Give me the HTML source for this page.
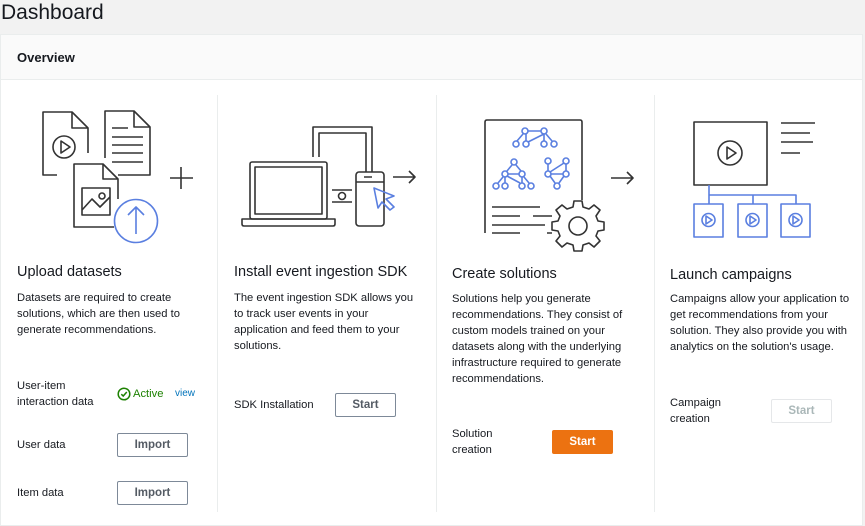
<!DOCTYPE html>
<html><head><meta charset="utf-8"><style>
*{margin:0;padding:0;box-sizing:border-box}
body{width:865px;height:526px;background:#f2f2f2;font-family:"Liberation Sans",sans-serif;color:#16191f;position:relative;overflow:hidden}
.a{position:absolute;white-space:nowrap}
.t{font-size:14.5px;color:#16191f}
.d{font-size:11.2px;line-height:16px;color:#16191f}
.l{font-size:11.2px;line-height:16px}
.b{position:absolute;border:1px solid #7d8998;background:#fff;font-size:11.5px;font-weight:bold;color:#545b64;text-align:center;border-radius:2px}
</style></head><body>
<div class="a" style="left:1px;top:1px;font-size:21px;color:#16191f">Dashboard</div>
<div class="a" style="left:0;top:34px;width:863px;height:492px;background:#fff;border:1px solid #eaeded"></div>
<div class="a" style="left:0;top:34px;width:863px;height:46px;background:#fafafa;border:1px solid #eaeded"></div>
<div class="a" style="left:17px;top:50px;font-size:13px;font-weight:bold">Overview</div>
<div class="a" style="left:217px;top:95px;width:1px;height:417px;background:#eaeded"></div>
<div class="a" style="left:436px;top:95px;width:1px;height:417px;background:#eaeded"></div>
<div class="a" style="left:654px;top:95px;width:1px;height:417px;background:#eaeded"></div>

<svg class="a" style="left:0;top:0" width="865" height="526" fill="none" stroke="#333" stroke-width="1.6" stroke-linejoin="round">
<!-- col1 -->
<path d="M57 175H43V112H72L88 128V153"/><path d="M72 112V128H88"/>
<circle cx="64" cy="147" r="11"/><path d="M61 141L70 147L61 153Z"/>
<path d="M118 175H150V127L134 111H105V158"/><path d="M134 111V127H150"/>
<path d="M112 128H128M112 137H143M112 145H143M112 153H143M112 162H143"/>
<path d="M114 227H74V164H103L118 179V199"/><path d="M103 164V179H118"/>
<rect x="82" y="188" width="28" height="27"/><path d="M82 210L92 199L100 207L110 197"/><circle cx="102" cy="196" r="3"/>
<circle cx="136" cy="221" r="21.5" stroke="#5a7fe0"/><path d="M136 234V207M128 215L136 207L144 215" stroke="#5a7fe0"/>
<path d="M170 178H193M181 167V189"/>
<!-- col2 -->
<path d="M313 157V127H372V172"/><path d="M319 157V133H366V172"/>
<rect x="250" y="162" width="77" height="57" rx="2"/><rect x="255" y="167" width="67" height="47"/>
<path d="M242 219H335V224Q335 226 333 226H244Q242 226 242 224Z"/>
<path d="M332 190H352M332 202H352"/><circle cx="342" cy="196" r="3.5"/>
<rect x="356" y="172" width="28" height="54" rx="3"/><path d="M356 182H384M364 177H372"/>
<path d="M374 188L394 196L386 199L394 207L390 210L382 202L378 208Z" stroke="#5a7fe0"/>
<path d="M393 177H415M409 171L415 177L409 183"/>
<!-- col3 -->
<path d="M485 233V122Q485 120 487 120H580Q582 120 582 122V200"/>
<path d="M492 207H540M492 216H520M533 216H552M492 225H545M492 233H520M547 233H552"/>
<g stroke="#5a7fe0">
<circle cx="525" cy="131" r="3"/><circle cx="544" cy="131" r="3"/><circle cx="516" cy="144" r="3"/><circle cx="526" cy="144" r="3"/><circle cx="544" cy="144" r="3"/><circle cx="554" cy="144" r="3"/>
<path d="M528 131H541M523 134L517 141M526 134V141M544 134L528 142M544 134V141M546 134L552 141"/>
<circle cx="514" cy="162" r="3"/><circle cx="505" cy="174" r="3"/><circle cx="522" cy="174" r="3"/><circle cx="496" cy="186" r="3"/><circle cx="505" cy="186" r="3"/><circle cx="522" cy="186" r="3"/><circle cx="531" cy="186" r="3"/>
<path d="M512 165L507 171M516 165L521 171M508 174H519M503 177L498 183M505 177V183M522 177V183M524 177L529 183M507 176L520 183"/>
<circle cx="548" cy="161" r="3"/><circle cx="566" cy="161" r="3"/><circle cx="548" cy="174" r="3"/><circle cx="566" cy="174" r="3"/><circle cx="557" cy="186" r="3"/>
<path d="M548 164V171M566 164V171M551 174H563M564 163L550 172M550 176L555 183M564 176L559 183"/>
</g>
<path d="M574 201L582 201L583 207L589 209L594 205L600 210L596 216L598 221L604 222V230L598 231L596 236L600 241L594 247L589 243L583 245L582 251H574L573 245L567 243L562 247L556 241L560 236L558 231L552 230V222L558 221L560 216L556 210L562 205L567 209L573 207Z" fill="#fff"/>
<circle cx="578" cy="226" r="9"/>
<path d="M611 178H633M627 172L633 178L627 184"/>
<!-- col4 -->
<rect x="694" y="122" width="73" height="63"/><circle cx="730" cy="153" r="12"/><path d="M727 147L736 153L727 159Z"/>
<path d="M781 123H815M781 133H810M781 142H813M781 153H800"/>
<g stroke="#5a7fe0"><path d="M709 185V204M709 195H796V204M753 195V204"/>
<rect x="694" y="204" width="29" height="33"/><rect x="738" y="204" width="29" height="33"/><rect x="781" y="204" width="29" height="33"/>
<circle cx="708.5" cy="220" r="6.5"/><circle cx="752.5" cy="220" r="6.5"/><circle cx="795.5" cy="220" r="6.5"/>
<path d="M706 216L712 220L706 224Z M750 216L756 220L750 224Z M793 216L799 220L793 224Z"/></g>
</svg>

<div class="a t" style="left:17px;top:264px">Upload datasets</div>
<div class="a d" style="left:17px;top:290px">Datasets are required to create<br>solutions, which are then used to<br>generate recommendations.</div>
<div class="a t" style="left:234px;top:264px">Install event ingestion SDK</div>
<div class="a d" style="left:234px;top:290px">The event ingestion SDK allows you<br>to track user events in your<br>application and feed them to your<br>solutions.</div>
<div class="a t" style="left:452px;top:266px">Create solutions</div>
<div class="a d" style="left:452px;top:291px">Solutions help you generate<br>recommendations. They consist of<br>custom models trained on your<br>datasets along with the underlying<br>infrastructure required to generate<br>recommendations.</div>
<div class="a t" style="left:670px;top:267px">Launch campaigns</div>
<div class="a d" style="left:670px;top:291px">Campaigns allow your application to<br>get recommendations from your<br>solution. They also provide you with<br>analytics on the solution's usage.</div>

<div class="a l" style="left:17px;top:378px">User-item<br>interaction data</div>
<svg class="a" style="left:117px;top:387px" width="14" height="14" fill="none" stroke="#1d8102" stroke-width="1.5"><circle cx="7" cy="7" r="5.8"/><path d="M4.3 7.2L6.2 9L9.8 5"/></svg>
<div class="a l" style="left:133px;top:386px;color:#1d8102">Active</div>
<div class="a" style="left:175px;top:388px;font-size:10px;color:#0073bb">view</div>
<div class="a l" style="left:17px;top:437px">User data</div>
<div class="b" style="left:117px;top:433px;width:71px;height:24px;line-height:22px">Import</div>
<div class="a l" style="left:17px;top:485px">Item data</div>
<div class="b" style="left:117px;top:481px;width:71px;height:24px;line-height:22px">Import</div>
<div class="a l" style="left:234px;top:397px">SDK Installation</div>
<div class="b" style="left:335px;top:393px;width:61px;height:24px;line-height:22px">Start</div>
<div class="a l" style="left:452px;top:426px">Solution<br>creation</div>
<div class="b" style="left:552px;top:430px;width:61px;height:24px;line-height:22px;background:#ec7211;border-color:#ec7211;color:#fff">Start</div>
<div class="a l" style="left:670px;top:395px">Campaign<br>creation</div>
<div class="b" style="left:771px;top:399px;width:61px;height:24px;line-height:22px;border-color:#e5e7e9;color:#aab7b8">Start</div>
</body></html>
